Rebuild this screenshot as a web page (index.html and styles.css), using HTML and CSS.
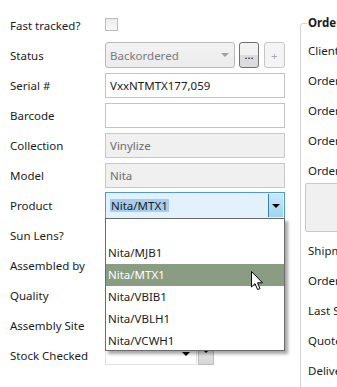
FILE: index.html
```html
<!DOCTYPE html>
<html lang="en">
  <head>
    <meta charset="UTF-8" />
    <title>Order details</title>
    <link rel="stylesheet" href="styles.css">
  </head>
  <body>
    <div id="wrap">
      <div class="form">
        <div class="row">
          <label>Fast tracked?</label>
          <span class="check"></span>
        </div>
        <div class="row">
          <label>Status</label>
          <div class="combo-status">Backordered<i class="tri grey"></i></div>
          <button class="btn btn-more">...</button>
          <button class="btn btn-plus">+</button>
        </div>
        <div class="row">
          <label>Serial #</label>
          <div class="field">VxxNTMTX177,059</div>
        </div>
        <div class="row">
          <label>Barcode</label>
          <div class="field"></div>
        </div>
        <div class="row">
          <label>Collection</label>
          <div class="field readonly">Vinylize</div>
        </div>
        <div class="row">
          <label>Model</label>
          <div class="field readonly">Nita</div>
        </div>
        <div class="row">
          <label>Product</label>
          <div class="combo-product">
            <span class="sel">Nita/MTX1</span>
            <span class="drop"><i class="tri"></i></span>
          </div>
        </div>
        <div class="row"><label>Sun Lens?</label></div>
        <div class="row"><label>Assembled by</label></div>
        <div class="row"><label>Quality</label></div>
        <div class="row"><label>Assembly Site</label></div>
        <div class="row">
          <label>Stock Checked</label>
          <div class="combo-stock"><i class="tri"></i></div>
          <span class="stock-btn"><i class="tri"></i></span>
        </div>
      </div>

      <fieldset class="group">
        <legend>Order</legend>
        <div class="grow">Client</div>
        <div class="grow">Order</div>
        <div class="grow">Order</div>
        <div class="grow">Order</div>
        <div class="grow">Order</div>
        <div class="notes"></div>
        <div class="grow">Shipment</div>
        <div class="grow">Order</div>
        <div class="grow">Last Shipped</div>
        <div class="grow">Quote</div>
        <div class="grow">Delivery</div>
      </fieldset>

      <!-- open dropdown of Product -->
      <ul class="popup">
        <li></li>
        <li>Nita/MJB1</li>
        <li class="on">Nita/MTX1</li>
        <li>Nita/VBIB1</li>
        <li>Nita/VBLH1</li>
        <li>Nita/VCWH1</li>
      </ul>
      <svg class="cursor" width="13" height="20" viewBox="0 0 13 20">
        <path d="M0.5 0.5 L0.5 16 L4 12.6 L6.6 18.6 L9 17.6 L6.5 11.8 L11.5 11.8 Z" fill="#fff" stroke="#000" stroke-width="1" stroke-linejoin="miter" />
      </svg>
    </div>
  </body>
</html>
```

FILE: styles.css
```css
* {
  box-sizing: border-box;
}
html,
body,
ul,
li {
  padding: 0;
  margin: 0;
  list-style: none;
}
body {
  font-family: "Noto Sans", "Open Sans", sans-serif;
  font-size: 11.5px;
  color: #1b1b1b;
  background: #fff;
  overflow: hidden;
}
#wrap {
  position: relative;
  display: flex;
  width: 337px;
  height: 387px;
  overflow: hidden;
}
.form {
  flex: none;
  width: 300px;
  padding: 10px 0 0 10px;
}
.row {
  display: flex;
  align-items: center;
  height: 30px;
}
.row label {
  flex: none;
  width: 95px;
}
.check {
  width: 13px;
  height: 13px;
  margin-top: -1px;
  border: 1px solid #bcbcbc;
  background: linear-gradient(#ececec, #f7f7f7);
}
.tri {
  display: inline-block;
  width: 0;
  height: 0;
  border-left: 4px solid transparent;
  border-right: 4px solid transparent;
  border-top: 4px solid #000;
}
.tri.grey {
  border-top-color: #a0a0a0;
}
.combo-status {
  display: flex;
  align-items: center;
  justify-content: space-between;
  width: 130px;
  height: 26px;
  padding: 0 5px 0 4px;
  color: #7a7a7a;
  border: 1px solid #b9b9b9;
  border-radius: 3px;
  background: linear-gradient(#f3f3f3, #ebebeb);
}
.btn {
  height: 26px;
  padding: 0;
  font-family: inherit;
  border-radius: 3px;
}
.btn-more {
  width: 20px;
  margin-left: 4px;
  font-size: 11px;
  line-height: 16px;
  color: #000;
  border: 1px solid #707070;
  background: linear-gradient(#f2f2f2 50%, #dcdcdc 50%);
}
.btn-plus {
  width: 21px;
  margin-left: 5px;
  font-size: 11px;
  color: #a8a8a8;
  border: 1px solid #c6c6c6;
  background: #f4f4f4;
}
.field {
  display: flex;
  align-items: center;
  width: 180px;
  height: 25px;
  padding: 0 4px;
  border: 1px solid #c4c4c4;
  background: #fff;
}
.field.readonly {
  color: #6d6d6d;
  border-color: #c8c8c8;
  background: #f0f0f0;
}
.combo-product {
  display: flex;
  align-items: center;
  justify-content: space-between;
  width: 180px;
  height: 27px;
  margin-top: 1px;
  padding: 0 1px 0 4px;
  border: 1px solid #4f9ad6;
  background: #e3f1fc;
}
.combo-product .sel {
  padding: 0 1px;
  line-height: 13px;
  background: #a4cdf0;
}
.combo-product .drop {
  display: flex;
  align-items: center;
  justify-content: center;
  width: 15px;
  height: 23px;
  border: 1px solid #3c7fb1;
  border-width: 0 0 0 1px;
  background: linear-gradient(#c9e9fb, #9fd3f1);
}
.combo-stock {
  display: flex;
  align-items: center;
  justify-content: flex-end;
  width: 92px;
  height: 22px;
  margin-top: -3px;
  padding-right: 6px;
  border: 1px solid #e2e2e2;
}
.stock-btn {
  display: flex;
  justify-content: center;
  width: 16px;
  height: 23px;
  margin: -3px 0 0 1px;
  padding-top: 6px;
  border: 1px solid #bdbdbd;
  background: linear-gradient(#f0f0f0, #d6d6d6);
}
.group {
  flex: none;
  width: 60px;
  height: 420px;
  margin: 15px 0 0 0;
  padding: 4px 0 0 7px;
  border: 1px solid #d4d4d4;
  border-radius: 3px;
  white-space: nowrap;
}
.group legend {
  margin-left: -1px;
  padding: 0 1px;
  line-height: 16px;
  font-weight: bold;
  color: #1b1b1b;
}
.grow {
  display: flex;
  align-items: center;
  height: 30px;
}
.notes {
  height: 49px;
  margin: -2px 0 3px -3px;
  border: 1px solid #c8c8c8;
  border-radius: 2px;
  background: #f0f0f0;
}
.popup {
  position: absolute;
  left: 105px;
  top: 218px;
  width: 180px;
  height: 133px;
  padding-top: 1px;
  border: 1px solid #6b6b6b;
  background: #fff;
  box-shadow: 3px 3px 3px rgba(0, 0, 0, 0.35);
}
.popup li {
  height: 22px;
  padding-left: 2px;
  line-height: 22px;
}
.popup li.on {
  color: #fff;
  background: #8a9c82;
}
.cursor {
  position: absolute;
  left: 251px;
  top: 271px;
}
```
